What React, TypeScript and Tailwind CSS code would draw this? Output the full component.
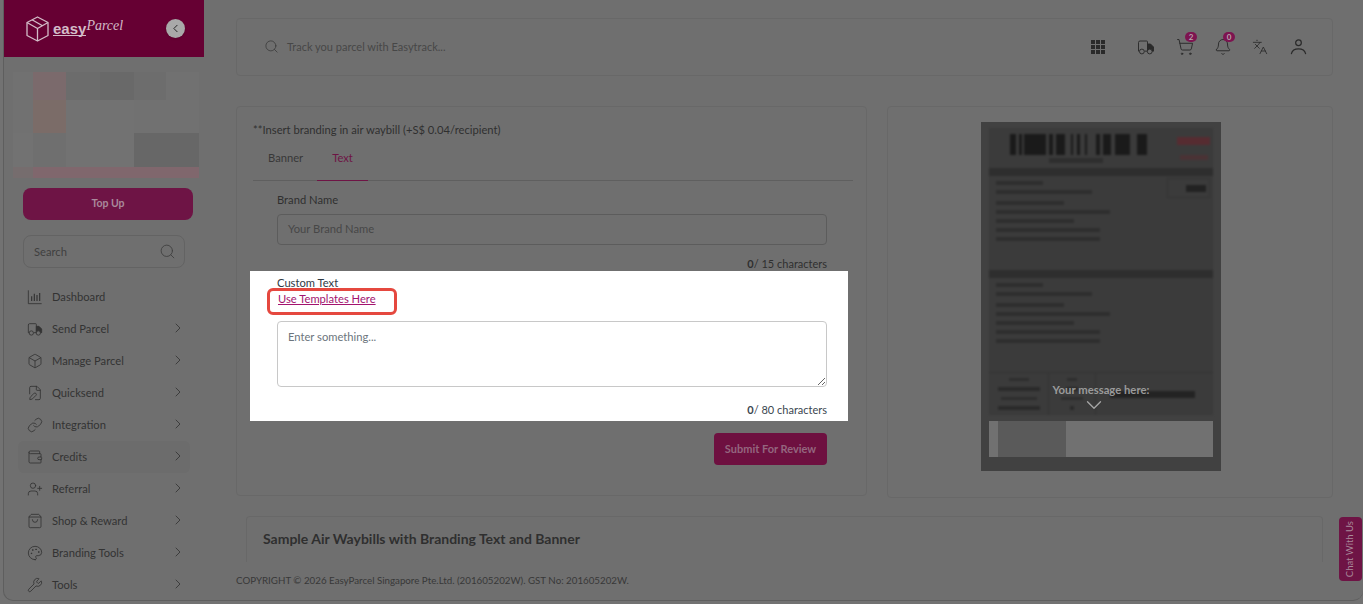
import {
  Bell,
  Box,
  ChevronDown,
  ChevronLeft,
  ChevronRight,
  FilePen,
  Languages,
  Link,
  Palette,
  Search,
  ShoppingBag,
  ShoppingCart,
  UserPlus,
  Wallet,
  Wrench,
} from "lucide-react";

interface IconProps {
  size?: number;
  strokeWidth?: number;
  className?: string;
}

const TruckIcon = ({ size = 16, strokeWidth = 1.25, className }: IconProps) => (
  <svg width={size} height={size} viewBox="0 0 24 24" fill="none" stroke="currentColor" strokeWidth={strokeWidth} className={className}>
    <path d="M3 17.5H2V6a2 2 0 0 1 2-2h9a1 1 0 0 1 1 1v12.5H10" strokeLinejoin="round" />
    <path d="M14 8h4l4 4v5.5h-1.5H14Z" fill="currentColor" strokeLinejoin="round" />
    <circle cx="6.5" cy="18" r="3.2" fill="#6f6f6f" />
    <circle cx="17" cy="18" r="3.2" fill="#6f6f6f" />
  </svg>
);

const DashboardIcon = ({ size = 16, strokeWidth = 1.25, className }: IconProps) => (
  <svg width={size} height={size} viewBox="0 0 24 24" fill="none" stroke="currentColor" strokeWidth={strokeWidth} className={className}>
    <path d="M2 2v20h20" />
    <path d="M7 18v-7M11 18V7M15 18v-9M19 18V6" strokeWidth={strokeWidth + 0.5} />
  </svg>
);

const menuItems = [
  { label: "Dashboard", icon: DashboardIcon, arrow: false },
  { label: "Send Parcel", icon: TruckIcon, arrow: true },
  { label: "Manage Parcel", icon: Box, arrow: true },
  { label: "Quicksend", icon: FilePen, arrow: true },
  { label: "Integration", icon: Link, arrow: true },
  { label: "Credits", icon: Wallet, arrow: true },
  { label: "Referral", icon: UserPlus, arrow: true },
  { label: "Shop & Reward", icon: ShoppingBag, arrow: true },
  { label: "Branding Tools", icon: Palette, arrow: true },
  { label: "Tools", icon: Wrench, arrow: true },
];

// pixelated account card at the top of the sidebar
const blurTiles = [
  "bg-[#717171]", "bg-[#7b6a6c]", "bg-[#6c6c6c]", "bg-[#696969]", "bg-[#6d6d6d]", "bg-[#717171]",
  "bg-[#717171]", "bg-[#7b6c68]", "bg-[#727272]", "bg-[#727272]", "bg-[#717171]", "bg-[#717171]",
  "bg-[#727272]", "bg-[#6f6f6f]", "bg-[#727272]", "bg-[#727272]", "bg-[#676767]", "bg-[#676767]",
  "bg-[#766d6e]", "bg-[#80676d]", "bg-[#80676d]", "bg-[#80676d]", "bg-[#80676d]", "bg-[#80676d]",
];

const addressLines = ["w-[47px]", "w-[96px]", "w-[68px]", "w-[114px]", "w-[78px]", "w-[104px]", "w-[104px]"];

function Logo() {
  return (
    <div className="flex items-center text-[#d3bcc8]">
      <svg width="23" height="26" viewBox="0 0 23 26" fill="none" stroke="currentColor" strokeWidth="1.3" className="mr-[4px]">
        <path d="M11.5 1 22 6.5V19.5L11.5 25 1 19.5V6.5Z" strokeLinejoin="round" />
        <path d="M1 6.5 11.5 12.5 22 6.5M11.5 12.5V25M6 3.8l10.5 6" strokeLinejoin="round" />
      </svg>
      <span className="border-b border-[#d3bcc8] font-['Liberation_Sans',sans-serif] text-[15px] leading-[13px] font-bold">
        easy
      </span>
      <span className="-mt-[6px] font-['Liberation_Serif',serif] text-[14px] leading-none italic">Parcel</span>
    </div>
  );
}

function Sidebar() {
  return (
    <aside className="flex h-full w-[200px] shrink-0 flex-col">
      <div className="flex h-[57px] shrink-0 items-center justify-between bg-[#660033] pr-[19px] pl-[22px]">
        <Logo />
        <div className="flex h-[19px] w-[19px] items-center justify-center rounded-full bg-[#a9a9a9] text-[#1f1f1f] shadow">
          <ChevronLeft size={13} strokeWidth={1.75} />
        </div>
      </div>

      <div className="mt-[15px] ml-[9px] grid h-[106px] w-[186px] grid-cols-[20px_33px_34px_34px_32px_33px] grid-rows-[28px_33px_34px_11px] blur-[0.4px]">
        {blurTiles.map((color, i) => (
          <div key={i} className={color} />
        ))}
      </div>

      <div className="mt-[10px] ml-[19px] flex h-[32px] w-[170px] shrink-0 items-center justify-center rounded-[8px] bg-[#6e1445] text-[10.5px] font-bold text-[#a98a9b]">
        Top Up
      </div>

      <div className="mt-[15px] ml-[19px] flex h-[33px] w-[162px] shrink-0 items-center justify-between rounded-[8px] border border-[#636363] pr-[8px] pl-[10px] text-[11.2px] text-[#3f3f3f]">
        <span className="pt-[1px]">Search</span>
        <Search size={17} strokeWidth={1.25} className="text-[#3f3f3f]" />
      </div>

      <nav className="mt-[13px] flex flex-col text-[11.2px] text-[#333333]">
        {menuItems.map(({ label, icon: Icon, arrow }) => (
          <div
            key={label}
            className={`mx-[14px] flex h-[32px] shrink-0 items-center pr-[4px] pl-[9px] ${
              label === "Credits" ? "rounded-[6px] bg-[#6c6c6c]" : ""
            }`}
          >
            <Icon size={16} strokeWidth={1.25} className="shrink-0" />
            <span className="ml-[9px] flex-1">{label}</span>
            {arrow && <ChevronRight size={16} strokeWidth={1.25} className="shrink-0 -translate-y-[1px]" />}
          </div>
        ))}
      </nav>
    </aside>
  );
}

function Topbar() {
  return (
    <header className="flex h-[58px] shrink-0 items-center rounded-[4px] border border-[#686868] pr-[25px] pb-[1px] pl-[27px] text-[#2a2a2a]">
      <Search size={15} strokeWidth={1.25} className="text-[#3a3a3a]" />
      <span className="ml-[8px] flex-1 pt-[1px] text-[11px] text-[#474747]">Track you parcel with Easytrack...</span>
      <svg width="14" height="14" viewBox="0 0 14 14" fill="currentColor" className="mr-[32px]">
        <path d="M0 0h4v4H0zM5 0h4v4H5zM10 0h4v4h-4zM0 5h4v4H0zM5 5h4v4H5zM10 5h4v4h-4zM0 10h4v4H0zM5 10h4v4H5zM10 10h4v4h-4z" />
      </svg>
      <TruckIcon size={18} strokeWidth={1.25} className="mr-[21px]" />
      <div className="relative mr-[20px]">
        <ShoppingCart size={18} strokeWidth={1.25} />
        <span className="absolute -top-[6px] left-[9px] flex h-[10px] w-[12px] items-center justify-center rounded-full bg-[#7d1450] text-[8px] font-bold text-[#b9a3ae]">
          2
        </span>
      </div>
      <div className="relative mr-[20px]">
        <Bell size={18} strokeWidth={1.25} />
        <span className="absolute -top-[6px] left-[9px] flex h-[10px] w-[12px] items-center justify-center rounded-full bg-[#7d1450] text-[8px] font-bold text-[#b9a3ae]">
          0
        </span>
      </div>
      <Languages size={16} strokeWidth={1.25} className="mr-[22px]" />
      <svg width="17" height="17" viewBox="0 0 18 18" fill="none" stroke="currentColor" strokeWidth="1.3">
        <circle cx="9" cy="5" r="3" />
        <path d="M1.5 16.5c.8-3.5 3.8-5 7.5-5s6.7 1.5 7.5 5" strokeLinecap="round" />
      </svg>
    </header>
  );
}

function BrandingForm() {
  return (
    <section className="h-[390px] w-[631px] shrink-0 rounded-[4px] border border-[#686868] pt-[15px]">
      <p className="pl-[16px] text-[11.2px] leading-[16px] text-[#2f2f2f]">
        **Insert branding in air waybill (+S$ 0.04/recipient)
      </p>
      <div className="mt-[3px] mr-[13px] ml-[16px] flex h-[40px] border-b border-[#5f5f5f] text-[11.2px]">
        <span className="pt-[9px] pr-[14px] pl-[15px] text-[#383838]">Banner</span>
        <span className="-mb-px border-b border-[#6e1445] px-[15px] pt-[9px] text-[#6e1445]">Text</span>
      </div>

      <div className="mt-[11px] pr-[39px] pl-[40px]">
        <p className="text-[11.2px] leading-[16px] text-[#2f2f2f]">Brand Name</p>
        <div className="mt-[6px] flex h-[31px] items-center rounded-[4px] border border-[#5c5c5c] pb-[1px] pl-[10px] text-[11.2px] text-[#474747]">
          Your Brand Name
        </div>
        <p className="mt-[11px] text-right text-[11px] leading-[16px] text-[#2f2f2f]">
          <b>0</b>/ 15 characters
        </p>
      </div>

      <div className="relative mt-[-1px] ml-[13px] h-[150px] w-[598px] bg-white pt-[4px] pr-[21px] pl-[27px]">
        <p className="text-[11.2px] leading-[16px] text-[#2f3a45]">Custom Text</p>
        <a className="block pl-[1px] text-[11.2px] leading-[16px] text-[#a3136f] underline">Use Templates Here</a>
        <textarea
          readOnly
          placeholder="Enter something..."
          className="mt-[14px] block h-[66px] w-full rounded-[4px] border border-[#c8c8c8] px-[10px] pt-[7px] text-[11.2px] leading-[16px] placeholder:text-[#6c757d]"
        />
        <p className="mt-[15px] text-right text-[11px] leading-[16px] text-[#3b4650]">
          <b>0</b>/ 80 characters
        </p>
        <div className="absolute top-[17px] left-[17px] h-[27px] w-[130px] rounded-[6px] border-[3px] border-[#e5483f]" />
      </div>

      <div className="mt-[12px] flex justify-end pr-[39px]">
        <div className="flex h-[32px] w-[113px] items-center justify-center rounded-[4px] bg-[#6e1040] text-[11px] font-bold text-[#94667f]">
          Submit For Review
        </div>
      </div>
    </section>
  );
}

function AddressBlock() {
  return (
    <div className="flex flex-col gap-[5px]">
      {addressLines.map((width, i) => (
        <div key={i} className={`h-[4px] bg-[#2e2e2e] ${width} ${i === 2 ? "mt-[2px]" : ""}`} />
      ))}
    </div>
  );
}

function WaybillPreview() {
  return (
    <section className="h-[392px] w-[446px] shrink-0 rounded-[4px] border border-[#686868] pt-[15px] pl-[93px]">
      <div className="relative h-[349px] w-[240px] bg-[#414141] px-[8px] pt-[6px]">
        <div className="h-[287px] bg-[#3b3b3b] blur-[1px]">
          <div className="relative h-[40px]">
            <svg width="138" height="21" viewBox="0 0 138 21" className="absolute top-[6px] left-[21px]" fill="#1a1a1a">
              <path d="M0 0h6v21H0zM9 0h3v21H9zM14 0h22v21H14zM39 0h4v21h-4zM46 0h9v21h-9zM61 0h2v21h-2zM67 0h3v21h-3zM75 0h2v21h-2zM86 0h4v21h-4zM93 0h8v21h-8zM105 0h15v21h-15zM127 0h10v21h-10z" />
            </svg>
            <div className="absolute top-[9px] right-[3px] h-[8px] w-[33px] bg-[#562c31]" />
            <div className="absolute top-[27px] right-[5px] h-[5px] w-[28px] bg-[#4a3235]" />
            <div className="absolute top-[30px] left-[60px] h-[5px] w-[54px] bg-[#2e2e2e]" />
          </div>
          <div className="h-[8px] bg-[#2e2e2e]" />
          <div className="relative h-[94px] px-[7px] pt-[5px]">
            <AddressBlock />
            <div className="absolute top-[2px] right-[3px] flex h-[20px] w-[43px] items-center justify-end border border-[#333333] pr-[3px]">
              <div className="h-[7px] w-[20px] bg-[#222222]" />
            </div>
          </div>
          <div className="h-[8px] bg-[#2e2e2e]" />
          <div className="h-[94px] px-[7px] pt-[5px]">
            <AddressBlock />
          </div>
          <div className="flex h-[43px] items-center border-t border-[#333333]">
            <div className="flex h-full w-[60px] flex-col items-center justify-around border-r border-[#333333] py-[2px]">
              <div className="h-[3px] w-[20px] bg-[#2e2e2e]" />
              <div className="h-[4px] w-[42px] bg-[#2a2a2a]" />
              <div className="h-[3px] w-[36px] bg-[#2e2e2e]" />
              <div className="h-[4px] w-[42px] bg-[#2a2a2a]" />
            </div>
            <div className="flex h-full w-[47px] flex-col items-center justify-around border-r border-[#333333] py-[2px]">
              <div className="h-[3px] w-[10px] bg-[#2e2e2e]" />
              <div className="h-[4px] w-[12px] bg-[#2a2a2a]" />
              <div className="h-[3px] w-[22px] bg-[#2e2e2e]" />
              <div className="h-[4px] w-[4px] bg-[#2a2a2a]" />
            </div>
            <div className="ml-[14px] h-[7px] w-[85px] bg-[#232323]" />
          </div>
        </div>

        <div className="mt-[6px] flex h-[36px] bg-[#717171]">
          <div className="ml-[9px] w-[68px] bg-[#5a5a5a]" />
        </div>

        <div className="absolute top-[260px] left-0 flex w-full flex-col items-center text-[11.3px] leading-[16px] font-bold text-[#9a9a9a]">
          <span>Your message here:</span>
          <ChevronDown size={26} strokeWidth={1.25} className="-mt-[6px] -translate-x-[7px] text-[#a5a5a5]" />
        </div>
      </div>
    </section>
  );
}

export default function App() {
  return (
    <div className="h-screen w-screen overflow-hidden bg-[#727272] font-['Lato',sans-serif]">
      <div className="relative ml-[3px] flex h-[601px] w-[1360px] overflow-hidden rounded-b-[10px] border-b border-l border-[#5e5e5e] bg-[#6f6f6f]">
        <Sidebar />

        <main className="flex min-w-0 flex-1 flex-col pt-[18px] pr-[30px] pl-[32px]">
          <Topbar />
          <div className="mt-[30px] flex items-start gap-[20px]">
            <BrandingForm />
            <WaybillPreview />
          </div>
          <div className="mx-[10px] mt-[18px] h-[46px] shrink-0 rounded-t-[4px] border border-b-0 border-[#686868] px-[16px] pt-[12px] text-[14px] leading-[20px] font-bold text-[#2f2f2f]">
            Sample Air Waybills with Branding Text and Banner
          </div>
          <p className="mt-[11px] text-[9.75px] leading-[14px] text-[#383838]">
            COPYRIGHT © 2026 EasyParcel Singapore Pte.Ltd. (201605202W). GST No: 201605202W.
          </p>
        </main>

        <div className="absolute top-[517px] right-[1px] flex h-[64px] w-[23px] items-center justify-center rounded-[4px] bg-[#6e1445]">
          <span className="-rotate-90 text-[9.5px] whitespace-nowrap text-[#a98a9b]">Chat With Us</span>
        </div>
      </div>
    </div>
  );
}
